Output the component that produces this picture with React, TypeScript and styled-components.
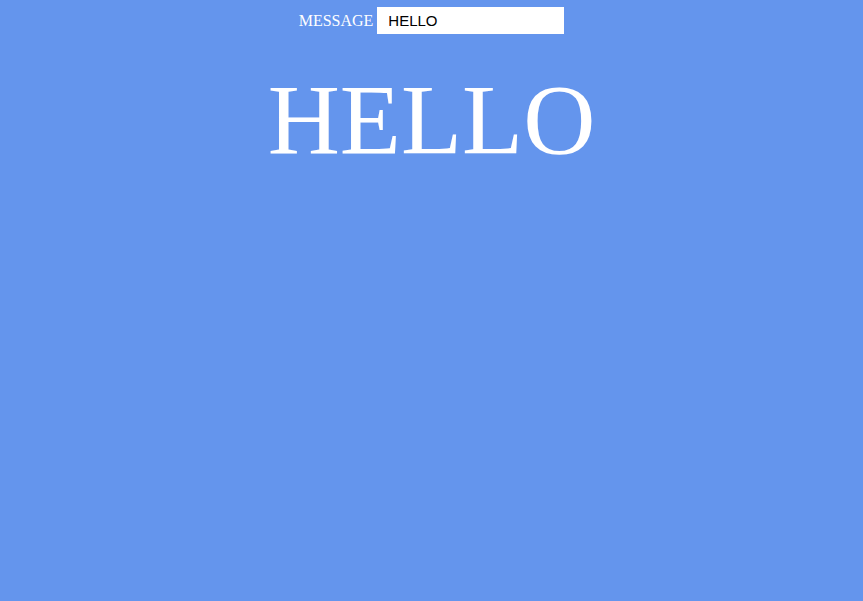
import React, { useState } from "react";
import styled, { createGlobalStyle } from "styled-components";

const Global = createGlobalStyle`
  html, body { margin: 0; padding: 0; background: #6495ed; }
  body { font-family: "Liberation Serif", "Times New Roman", serif; }
`;

const Page = styled.div`
  min-height: 601px;
  background: #6495ed;
  display: flex;
  flex-direction: column;
  align-items: center;
  padding-top: 7px;
  box-sizing: border-box;
`;

const Row = styled.div`
  display: flex;
  align-items: center;
  gap: 4px;
`;

const Label = styled.label`
  color: #fff;
  font-family: "Liberation Serif", "Times New Roman", serif;
  font-size: 16px;
  line-height: 18px;
`;

const Input = styled.input`
  width: 187px;
  height: 27px;
  box-sizing: border-box;
  border: none;
  outline: none;
  background: #fff;
  padding: 0 0 0 11px;
  font-family: "Liberation Sans", Arial, sans-serif;
  font-size: 15px;
  color: #000;
`;

const Heading = styled.h1`
  margin: 28px 0 0;
  color: #fff;
  font-family: "Liberation Serif", "Times New Roman", serif;
  font-weight: normal;
  font-size: 100px;
  line-height: 115px;
`;

export default function App() {
  const [msg, setMsg] = useState("HELLO");
  return (
    <>
      <Global />
      <Page>
        <Row>
          <Label htmlFor="msg">MESSAGE</Label>
          <Input id="msg" value={msg} onChange={(e) => setMsg(e.target.value)} />
        </Row>
        <Heading>{msg}</Heading>
      </Page>
    </>
  );
}
